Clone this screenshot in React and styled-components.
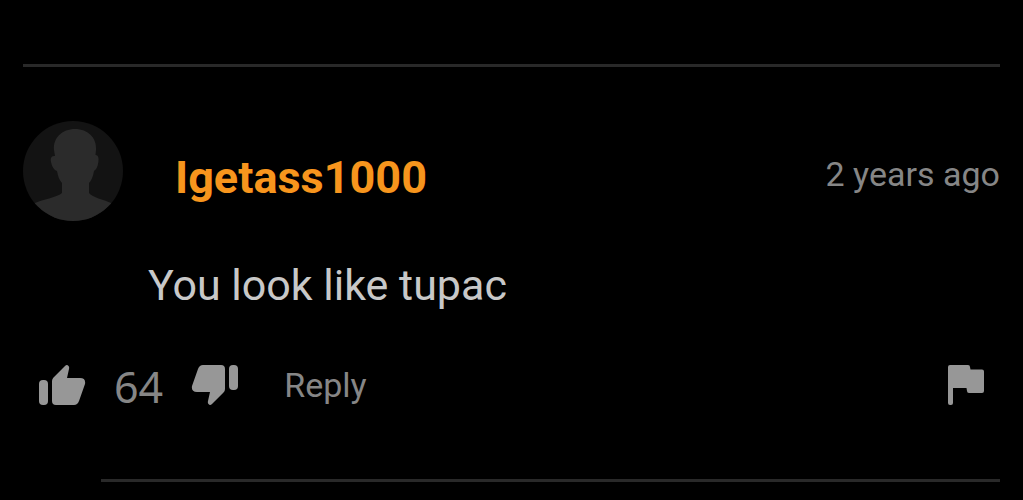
import React, { useState } from 'react';
import styled, { createGlobalStyle } from 'styled-components';

const GlobalStyle = createGlobalStyle`
  :root {
    --bg: #000000;
    --accent: #f7951d;
    --text: #c8c8c8;
    --muted-text: #868686;
    --icon: #979797;
    --border-color: #292929;
  }

  * {
    box-sizing: border-box;
  }

  body {
    margin: 0;
    font-family: Roboto, sans-serif;
    background: var(--bg);
    color: var(--text);
  }
`;

const Page = styled.main`
  padding: 64px 23px 16px;
`;

const Divider = styled.hr`
  height: 3px;
  margin: 0 0 0 ${({ $inset }) => ($inset ? '78px' : '0')};
  border: none;
  background: var(--border-color);
`;

const Comment = styled.article`
  padding: 54px 0 68px;
`;

const Header = styled.header`
  display: flex;
  align-items: center;
  gap: 52px;
  height: 100px;
`;

const Avatar = styled.svg`
  width: 100px;
  height: 100px;
  flex: none;
`;

const UserName = styled.a`
  flex: 1;
  padding-top: 14px;
  color: var(--accent);
  font-size: 45px;
  font-weight: 700;
  line-height: 52px;
  text-decoration: none;
`;

const Time = styled.time`
  padding-top: 6px;
  color: var(--muted-text);
  font-size: 34px;
  line-height: 40px;
`;

const Message = styled.p`
  margin: 38px 0 0 125px;
  font-size: 43px;
  line-height: 52px;
`;

const Actions = styled.footer`
  display: flex;
  align-items: center;
  height: 52px;
  margin-top: 48px;
  padding: 0 16px;
`;

const IconButton = styled.button`
  display: flex;
  padding: 0;
  border: none;
  background: none;
  color: var(--icon);
  cursor: pointer;

  svg {
    display: block;
    fill: currentColor;
  }
`;

const Score = styled.span`
  margin: 0 28px;
  padding-top: 4px;
  color: var(--muted-text);
  font-family: 'Noto Sans', sans-serif;
  font-size: 43px;
  line-height: 48px;
`;

const ReplyButton = styled.button`
  margin: 0 auto 0 46px;
  padding: 0;
  border: none;
  background: none;
  color: var(--muted-text);
  font-family: inherit;
  font-size: 34px;
  line-height: 40px;
  cursor: pointer;
`;

const ThumbIcon = ({ down }) => (
  <svg width="47" height="40" viewBox="0 0 47 40" aria-hidden="true">
    <g transform={down ? 'rotate(180 23.5 20)' : undefined}>
      <rect x="0" y="15" width="9" height="25" rx="4" />
      <path d="M13 16 Q13 14 14.5 12.500 L26 1 Q28 -1 29.500 1 Q30.500 2 30 4 L28 13 H41 Q47 13 46 19 L40 36 Q38.500 40 35 40 H17 Q13 40 13 36 Z" />
    </g>
  </svg>
);

const FlagIcon = () => (
  <svg width="36" height="40" viewBox="0 0 36 40" aria-hidden="true">
    <path d="M2 0 H20 Q22 0 22 2 L22.500 4.500 H34 Q36 4.500 36 6.500 V26 Q36 28 34 28 H21 Q19 28 19 26 L18.500 23 H5 V38 Q5 40 3 40 H2 Q0 40 0 38 V2 Q0 0 2 0 Z" />
  </svg>
);

const UserAvatar = () => (
  <Avatar viewBox="0 0 100 100" role="img" aria-label="User avatar">
    <defs>
      <clipPath id="avatar-circle">
        <circle cx="50" cy="50" r="50" />
      </clipPath>
    </defs>
    <g clipPath="url(#avatar-circle)">
      <rect width="100" height="100" fill="#131313" />
      <path
        fill="#2b2b2b"
        d="M52 8 C65 8 74 17 73 29 L72.500 34 C76 34 76 39 75 43 C74 48 72 49 71 50 C70 56 68 60 66 62 V72 C70 77 80 78 88 82 V100 H12 V82 C20 78 33 77 39 72 V62 C36 59 35 55 34 50 C31 49 29 46 28 41 C27 36 29 35 32 35 L31 29 C30 17 39 8 52 8 Z"
      />
    </g>
  </Avatar>
);

const App = () => {
  const [score, setScore] = useState(64);

  return (
    <>
      <GlobalStyle />
      <Page>
        <Divider />
        <Comment>
          <Header>
            <UserAvatar />
            <UserName href="#">Igetass1000</UserName>
            <Time>2 years ago</Time>
          </Header>

          <Message>You look like tupac</Message>

          <Actions>
            <IconButton type="button" aria-label="Like" onClick={() => setScore(score + 1)}>
              <ThumbIcon />
            </IconButton>
            <Score>{score}</Score>
            <IconButton type="button" aria-label="Dislike" onClick={() => setScore(score - 1)}>
              <ThumbIcon down />
            </IconButton>
            <ReplyButton type="button">Reply</ReplyButton>
            <IconButton type="button" aria-label="Report comment">
              <FlagIcon />
            </IconButton>
          </Actions>
        </Comment>
        <Divider $inset />
      </Page>
    </>
  );
};

export default App;
